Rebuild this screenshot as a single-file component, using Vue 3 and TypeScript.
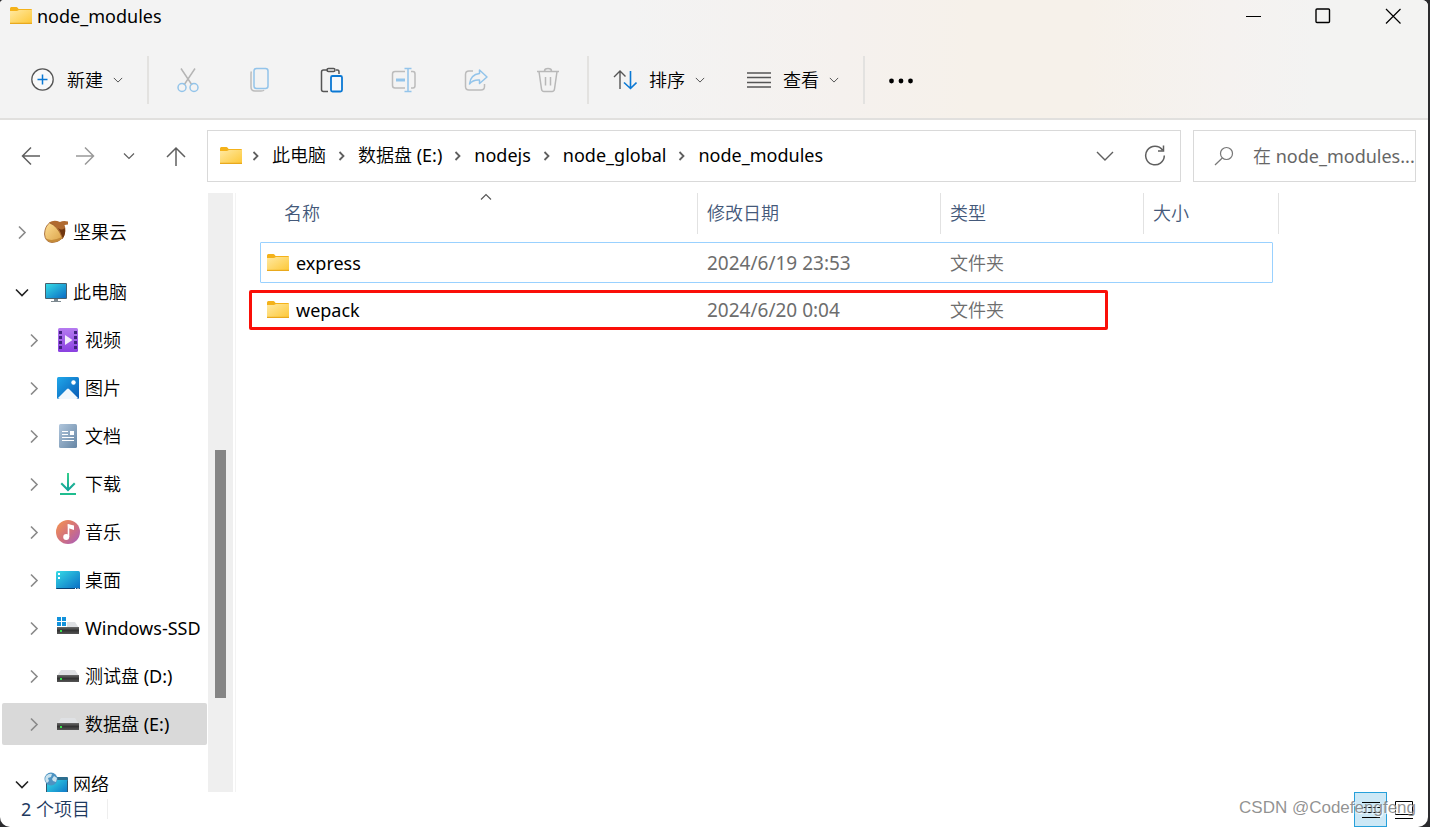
<script setup lang="ts">
import { ref } from 'vue'

interface TreeNode {
  id: string
  label: string
  icon: string
  level: 1 | 2
  open: boolean
  gap: boolean
}

interface FileRow {
  name: string
  modified: string
  type: string
  size: string
}

const tree: TreeNode[] = [
  { id: 'nut', label: '坚果云', icon: 'nut', level: 1, open: false, gap: false },
  { id: 'pc', label: '此电脑', icon: 'pc', level: 1, open: true, gap: true },
  { id: 'video', label: '视频', icon: 'video', level: 2, open: false, gap: false },
  { id: 'pictures', label: '图片', icon: 'picture', level: 2, open: false, gap: false },
  { id: 'documents', label: '文档', icon: 'document', level: 2, open: false, gap: false },
  { id: 'downloads', label: '下载', icon: 'download', level: 2, open: false, gap: false },
  { id: 'music', label: '音乐', icon: 'music', level: 2, open: false, gap: false },
  { id: 'desktop', label: '桌面', icon: 'desktop', level: 2, open: false, gap: false },
  { id: 'c', label: 'Windows-SSD', icon: 'sysdrive', level: 2, open: false, gap: false },
  { id: 'd', label: '测试盘 (D:)', icon: 'drive', level: 2, open: false, gap: false },
  { id: 'e', label: '数据盘 (E:)', icon: 'drive', level: 2, open: false, gap: false },
  { id: 'network', label: '网络', icon: 'network', level: 1, open: true, gap: true },
]

const crumbs = ['此电脑', '数据盘 (E:)', 'nodejs', 'node_global', 'node_modules']

const tools = [
  { id: 'cut', label: '剪切' },
  { id: 'copy', label: '复制' },
  { id: 'paste', label: '粘贴' },
  { id: 'rename', label: '重命名' },
  { id: 'share', label: '共享' },
  { id: 'trash', label: '删除' },
]

const files: FileRow[] = [
  { name: 'express', modified: '2024/6/19 23:53', type: '文件夹', size: '' },
  { name: 'wepack', modified: '2024/6/20 0:04', type: '文件夹', size: '' },
]

const selected = ref('e')
const focusedFile = ref('express')
const markedFile = 'wepack'
const query = ref('')
</script>

<template>
  <div class="window">
    <svg class="defs" aria-hidden="true">
      <defs>
        <linearGradient id="g-folder" x1="0" y1="0" x2="1" y2="1">
          <stop offset="0" stop-color="#ffe9a2" />
          <stop offset="1" stop-color="#fdc735" />
        </linearGradient>
        <linearGradient id="g-screen" x1="0" y1="0" x2="1" y2="1">
          <stop offset="0" stop-color="#35dbe6" />
          <stop offset="1" stop-color="#0a6cc4" />
        </linearGradient>
        <linearGradient id="g-video" x1="0" y1="0" x2="0" y2="1">
          <stop offset="0" stop-color="#b57bf0" />
          <stop offset="1" stop-color="#8a40e0" />
        </linearGradient>
        <linearGradient id="g-pic" x1="0" y1="0" x2="1" y2="1">
          <stop offset="0" stop-color="#20a8ea" />
          <stop offset="1" stop-color="#0759b5" />
        </linearGradient>
        <linearGradient id="g-doc" x1="0" y1="0" x2="1" y2="1">
          <stop offset="0" stop-color="#b0c6dc" />
          <stop offset="1" stop-color="#6686a5" />
        </linearGradient>
        <linearGradient id="g-down" x1="0" y1="0" x2="0" y2="1">
          <stop offset="0" stop-color="#35d08b" />
          <stop offset="1" stop-color="#0f9f9c" />
        </linearGradient>
        <linearGradient id="g-music" x1="0" y1="0" x2="1" y2="1">
          <stop offset="0.1" stop-color="#f08f56" />
          <stop offset="0.55" stop-color="#d0707f" />
          <stop offset="1" stop-color="#a55cc0" />
        </linearGradient>
        <linearGradient id="g-nut" x1="0" y1="0" x2="1" y2="1">
          <stop offset="0" stop-color="#ffdf95" />
          <stop offset="1" stop-color="#d9a045" />
        </linearGradient>
        <linearGradient id="g-drive" x1="0" y1="0" x2="0" y2="1">
          <stop offset="0" stop-color="#6b6b6b" />
          <stop offset="0.5" stop-color="#333333" />
          <stop offset="1" stop-color="#555555" />
        </linearGradient>

        <symbol id="i-folder" viewBox="0 0 24 20">
          <path d="M1 2.6Q1 1 2.4 1H7.4Q8.2 1 8.8 2L9.6 3H22Q23 3 23 4V7H1Z" fill="#f4b21a" />
          <path d="M1 5H8L10 4H23V17Q23 18 22 18H2Q1 18 1 17Z" fill="url(#g-folder)" />
          <path d="M1 17.4H23" stroke="#e9a91d" stroke-width="1.2" />
        </symbol>

        <symbol id="i-nut" viewBox="0 0 24 24">
          <path d="M5 2.500Q10-0.500 16 2Q19 0.500 24 1.500V4.500L20.500 5Q23 12 18.500 19Q13 7 5 2.500Z" fill="#b06a30" />
          <path d="M14 8Q18 11 20.500 8Q22.500 13 18.500 19Q17 12 14 8Z" fill="#70360f" />
          <path d="M5.500 3Q13 5 18.500 18Q14 22.500 8 22.500Q1 22 0.500 14Q1 6 5.500 3Z" fill="url(#g-nut)" stroke="#9a5c28" stroke-width="0.800" />
          <path d="M2 18.500Q8 22 17.800 17L18 18.300Q14 22.300 8 22.200Q4 22 2 18.500Z" fill="#c58b3a" />
        </symbol>

        <symbol id="i-pc" viewBox="0 0 24 24">
          <rect x="1" y="3" width="22" height="16" rx="1" fill="#47606e" />
          <rect x="2" y="4" width="20" height="14" fill="url(#g-screen)" />
          <path d="M10 19H14V21H17V22H7V21H10Z" fill="#7d8990" />
        </symbol>

        <symbol id="i-video" viewBox="0 0 24 24">
          <rect x="2" y="0" width="20" height="24" rx="1.500" fill="url(#g-video)" />
          <path d="M3 3H6V6H3ZM3 8H6V11H3ZM3 13H6V16H3ZM3 18H6V21H3ZM18 3H21V6H18ZM18 8H21V11H18ZM18 13H21V16H18ZM18 18H21V21H18Z" fill="#41217f" />
          <path d="M9 7L16.500 12L9 17Z" fill="#f3edfb" />
        </symbol>

        <symbol id="i-picture" viewBox="0 0 24 24">
          <rect x="1" y="1" width="22" height="22" rx="1.500" fill="url(#g-pic)" />
          <path d="M2 22L11 13Q12 12 13 13L22 22Q21.500 23 20 23H4Q2.500 23 2 22Z" fill="#f1f7fc" />
          <circle cx="17.500" cy="6.500" r="2.200" fill="#fff" />
        </symbol>

        <symbol id="i-document" viewBox="0 0 24 24">
          <rect x="3" y="0" width="18" height="24" rx="1.500" fill="url(#g-doc)" />
          <path d="M6 7.500H12M6 10.500H12M6 13.500H18M6 16.500H18" stroke="#fff" stroke-width="1.200" />
          <rect x="14" y="7" width="4" height="4" fill="#fff" />
        </symbol>

        <symbol id="i-download" viewBox="0 0 24 24">
          <path d="M11 1H13V15.500L18 10.500L19.500 12L12 19.500L4.500 12L6 10.500L11 15.500Z" fill="url(#g-down)" />
          <rect x="4" y="21" width="16" height="2" fill="#1fbd8f" />
        </symbol>

        <symbol id="i-music" viewBox="0 0 24 24">
          <circle cx="12" cy="12" r="12" fill="url(#g-music)" />
          <path d="M12.500 4.500V17" stroke="#fff" stroke-width="1.600" />
          <path d="M11.700 4L18 5.500V10L12 8Z" fill="#fff" />
          <circle cx="10.200" cy="17" r="3" fill="#fff" />
        </symbol>

        <symbol id="i-desktop" viewBox="0 0 24 24">
          <rect x="0" y="3" width="24" height="18" rx="1.500" fill="url(#g-screen)" />
          <path d="M0 20H24Q24 21 23 21H1Q0 21 0 20Z" fill="#0b3f70" />
          <path d="M2 5H4V7H2ZM2 9H4V11H2Z" fill="#fff" />
          <path d="M19 20.500H20M21.500 20.500H22.500" stroke="#fff" stroke-width="1" />
        </symbol>

        <symbol id="i-drive" viewBox="0 0 24 24">
          <path d="M5 6H19L23 12H1Z" fill="#dfe1e4" />
          <rect x="1" y="11" width="22" height="7" fill="url(#g-drive)" />
          <rect x="4" y="14" width="2" height="2" fill="#35e04a" />
        </symbol>

        <symbol id="i-sysdrive" viewBox="0 0 24 24">
          <path d="M5 6H19L23 12H1Z" fill="#dfe1e4" />
          <rect x="1" y="11" width="22" height="7" fill="url(#g-drive)" />
          <rect x="4" y="14" width="2" height="2" fill="#35e04a" />
          <rect x="0" y="0" width="11" height="11" fill="#fff" />
          <path d="M1 1H5V5H1ZM6 1H10V5H6ZM1 6H5V10H1ZM6 6H10V10H6Z" fill="#1292dc" />
        </symbol>

        <symbol id="i-network" viewBox="0 0 24 24">
          <path d="M2 8H24V24H2Z" fill="#2f566f" />
          <path d="M12 5H23Q24 5 24 6V9H12Z" fill="#2c6e8f" />
          <path d="M3 8H23V24H3Z" fill="url(#g-screen)" />
          <circle cx="7" cy="7" r="6.500" fill="#4d93c2" />
          <path d="M2 4Q5 1 8 2L7 5L4 6L5 9L3 11Q0 8 2 4ZM10 4L13 6L12 10L9 9L8 7Z" fill="#c9e2ee" />
        </symbol>

        <symbol id="i-down-chevron" viewBox="0 0 12 12">
          <path d="M1 3.500L6 8.500L11 3.500" fill="none" stroke="currentColor" stroke-width="1.200" />
        </symbol>

        <symbol id="t-cut" viewBox="0 0 30 30">
          <g fill="none" stroke-width="1.500">
            <path d="M8 3.500L19 20M22 3.500L11 20" stroke="#b5b5b5" />
            <circle cx="9" cy="22.500" r="4" stroke="#93c4ea" />
            <circle cx="21" cy="22.500" r="4" stroke="#93c4ea" />
          </g>
        </symbol>
        <symbol id="t-copy" viewBox="0 0 30 30">
          <g fill="none" stroke-width="1.500">
            <path d="M6.500 6.500Q6 7 6 9V22Q6 26 10 26H16Q18.500 26 19 25" stroke="#bcbcbc" />
            <rect x="9" y="3.500" width="14" height="20" rx="2.500" stroke="#93c4ea" />
          </g>
        </symbol>
        <symbol id="t-paste" viewBox="0 0 30 30">
          <g fill="none" stroke-width="1.500">
            <path d="M11 5H6.500Q4.500 5 4.500 7V24.500Q4.500 26.500 6.500 26.500H11M19 5H20.500Q22 5 22 7V9" stroke="#555" />
            <rect x="10" y="3.500" width="8" height="3" rx="1.500" stroke="#555" />
            <rect x="14" y="11" width="11" height="15.500" rx="1.500" stroke="#0a78d4" stroke-width="1.800" fill="#f6f9fc" />
          </g>
        </symbol>
        <symbol id="t-rename" viewBox="0 0 30 30">
          <g fill="none" stroke-width="1.500">
            <path d="M16 6.500H6Q3.500 6.500 3.500 9V20.500Q3.500 23 6 23H16M22 6.500H24Q26 6.500 26 9V20.500Q26 23 24 23H22" stroke="#bcbcbc" />
            <path d="M15.500 3.500H22.500M15.500 26.500H22.500M19 3.500V26.500" stroke="#93c4ea" />
            <path d="M7 15H16" stroke="#93c4ea" stroke-width="3" />
          </g>
        </symbol>
        <symbol id="t-share" viewBox="0 0 30 30">
          <g fill="none" stroke-width="1.500">
            <path d="M12 6H8Q4.500 6 4.500 9.500V21.500Q4.500 25 8 25H20Q23.500 25 23.500 21.500V19" stroke="#bcbcbc" />
            <path d="M18.500 5L26 12L18.500 18.500V15Q12 14.500 8.500 19Q9.500 9.500 18.500 8.500Z" stroke="#93c4ea" stroke-linejoin="round" />
          </g>
        </symbol>
        <symbol id="t-trash" viewBox="0 0 30 30">
          <g fill="none" stroke="#b8b8b8" stroke-width="1.500">
            <path d="M4 6.500H26M11.500 6Q11.500 3.500 15 3.500Q18.500 3.500 18.500 6M6 6.500L8.500 24Q8.800 26.500 11 26.500H19Q21.200 26.500 21.500 24L24 6.500M12.500 12V20.500M17.500 12V20.500" />
          </g>
        </symbol>
      </defs>
    </svg>

    <header class="top">
      <div class="titlebar">
        <svg class="folder"><use href="#i-folder" /></svg>
        <h1 class="title">node_modules</h1>
        <div class="controls">
          <button type="button" class="control" aria-label="最小化">
            <svg width="16" height="16" viewBox="0 0 16 16"><path d="M1 8.500H16" stroke="#000" /></svg>
          </button>
          <button type="button" class="control" aria-label="最大化">
            <svg width="16" height="16" viewBox="0 0 16 16"><rect x="1" y="1" width="13.500" height="13.500" rx="1" fill="none" stroke="#000" stroke-width="1.400" /></svg>
          </button>
          <button type="button" class="control" aria-label="关闭">
            <svg width="16" height="16" viewBox="0 0 16 16"><path d="M1 1L15.500 15.500M15.500 1L1 15.500" stroke="#000" stroke-width="1.200" /></svg>
          </button>
        </div>
      </div>

      <div class="commands">
        <button type="button" class="command">
          <svg width="24" height="24" viewBox="0 0 24 24">
            <circle cx="11.500" cy="11.500" r="10.700" fill="#f9f9f9" stroke="#555" stroke-width="1.300" />
            <path d="M11.500 6.500V16.500M6.500 11.500H16.500" stroke="#0a78d4" stroke-width="1.500" />
          </svg>
          <span>新建</span>
          <svg class="caret"><use href="#i-down-chevron" /></svg>
        </button>
        <span class="divider"></span>
        <div class="tools">
          <button v-for="t in tools" :key="t.id" type="button" class="tool" :aria-label="t.label">
            <svg width="30" height="30"><use :href="`#t-${t.id}`" /></svg>
          </button>
        </div>
        <span class="divider"></span>
        <div class="menus">
          <button type="button" class="command">
            <svg width="24" height="24" viewBox="0 0 24 24" fill="none" stroke-width="1.400">
              <path d="M7 21V3M1 9L7 3L12.500 8.500" stroke="#555" />
              <path d="M17.500 3V20.500M11 14.500L17.500 20.500L23.500 14.500" stroke="#0a78d4" stroke-width="1.600" />
            </svg>
            <span>排序</span>
            <svg class="caret"><use href="#i-down-chevron" /></svg>
          </button>
          <button type="button" class="command">
            <svg width="24" height="24" viewBox="0 0 24 24">
              <path d="M0 5H24M0 9.500H24M0 14.500H24M0 19H24" stroke="#555" stroke-width="1.400" />
            </svg>
            <span>查看</span>
            <svg class="caret"><use href="#i-down-chevron" /></svg>
          </button>
        </div>
        <span class="divider"></span>
        <button type="button" class="command" aria-label="更多">
          <svg width="24" height="24" viewBox="0 0 24 24">
            <circle cx="2.500" cy="13" r="2.400" /><circle cx="12" cy="13" r="2.400" /><circle cx="21.500" cy="13" r="2.400" />
          </svg>
        </button>
      </div>
    </header>

    <div class="navigation">
      <nav class="history">
        <button type="button" aria-label="后退">
          <svg width="20" height="20" viewBox="0 0 20 20"><path d="M19 10H1.500M10 1.500L1.500 10L10 18.500" fill="none" stroke="#5f5f5f" stroke-width="1.500" /></svg>
        </button>
        <button type="button" aria-label="前进">
          <svg width="20" height="20" viewBox="0 0 20 20"><path d="M1 10H18.500M10 1.500L18.500 10L10 18.500" fill="none" stroke="#999" stroke-width="1.500" /></svg>
        </button>
        <button type="button" aria-label="最近位置">
          <svg class="recent"><use href="#i-down-chevron" /></svg>
        </button>
        <button type="button" aria-label="上移">
          <svg width="20" height="20" viewBox="0 0 20 20"><path d="M10 20V2M1 11L10 2L19 11" fill="none" stroke="#5f5f5f" stroke-width="1.500" /></svg>
        </button>
      </nav>

      <div class="address">
        <svg class="folder"><use href="#i-folder" /></svg>
        <ol class="crumbs">
          <li v-for="c in crumbs" :key="c">
            <svg class="sep" viewBox="0 0 8 10"><path d="M1.500 1L5.500 5L1.500 9" fill="none" stroke="#5f5f5f" stroke-width="1.800" /></svg>
            <a href="#">{{ c }}</a>
          </li>
        </ol>
        <button type="button" class="box-button" aria-label="历史记录">
          <svg width="18" height="18" viewBox="0 0 18 18"><path d="M1 5L9 13L17 5" fill="none" stroke="#5f5f5f" stroke-width="1.400" /></svg>
        </button>
        <button type="button" class="box-button" aria-label="刷新">
          <svg width="22" height="22" viewBox="0 0 22 22"><path d="M18.500 5A9.300 9.300 0 1 0 20.300 10.500M19.500 0.500V6H14" fill="none" stroke="#5f5f5f" stroke-width="1.500" /></svg>
        </button>
      </div>

      <div class="search">
        <svg width="20" height="20" viewBox="0 0 20 20"><circle cx="12.500" cy="7.500" r="6" fill="none" stroke="#777" stroke-width="1.200" /><path d="M8.300 12L1 19" stroke="#777" stroke-width="1.200" /></svg>
        <input v-model="query" type="text" aria-label="搜索" placeholder="在 node_modules..." />
      </div>
    </div>

    <main class="body">
      <nav class="sidebar">
        <ul>
          <li v-for="n in tree" :key="n.id" :class="{ gap: n.gap }">
            <button type="button" class="node" :class="[`level-${n.level}`, { selected: selected === n.id }]" @click="selected = n.id">
              <svg v-if="n.open" class="arrow open" viewBox="0 0 14 14"><path d="M1 4.500L7 10.500L13 4.500" fill="none" stroke="#222" stroke-width="1.600" /></svg>
              <svg v-else class="arrow" viewBox="0 0 14 14"><path d="M4 1.500L10 7.500L4 13.500" fill="none" stroke="#8a8a8a" stroke-width="1.600" /></svg>
              <svg class="node-icon"><use :href="`#i-${n.icon}`" /></svg>
              <span>{{ n.label }}</span>
            </button>
          </li>
        </ul>
      </nav>
      <div class="scrollbar"><div class="thumb"></div></div>
      <div class="splitter"></div>

      <section class="files">
        <table>
          <colgroup>
            <col class="col-name" /><col class="col-date" /><col class="col-type" /><col class="col-size" />
          </colgroup>
          <thead>
            <tr>
              <th scope="col">
                <svg class="sort" viewBox="0 0 12 8"><path d="M1 6.500L6 1.500L11 6.500" fill="none" stroke="#555" stroke-width="1.100" /></svg>
                名称
              </th>
              <th scope="col">修改日期</th>
              <th scope="col">类型</th>
              <th scope="col">大小</th>
            </tr>
          </thead>
          <tbody>
            <tr
              v-for="f in files"
              :key="f.name"
              :class="{ focused: focusedFile === f.name, marked: markedFile === f.name }"
              @click="focusedFile = f.name"
            >
              <td>
                <div class="name"><svg class="folder"><use href="#i-folder" /></svg>{{ f.name }}</div>
              </td>
              <td class="date">{{ f.modified }}</td>
              <td>{{ f.type }}</td>
              <td>{{ f.size }}</td>
            </tr>
          </tbody>
        </table>
      </section>
    </main>

    <footer class="status">
      <span class="count">2 个项目</span>
      <div class="views">
        <button type="button" class="view active" aria-label="详细信息">
          <svg width="18" height="18" viewBox="0 0 18 18"><path d="M0 1.500H18M0 6.500H18M0 11.500H18M0 16.500H18" stroke="#000" /></svg>
        </button>
        <button type="button" class="view" aria-label="大图标">
          <svg width="18" height="18" viewBox="0 0 18 18"><path d="M0.500 0.500H17.500V13.500H0.500ZM0 17.500H18" fill="none" stroke="#000" /></svg>
        </button>
      </div>
      <span class="watermark">CSDN @Codefengfeng</span>
    </footer>
  </div>
</template>

<style>
body {
  margin: 0;
  background: #2b2b2e;
}
</style>

<style scoped>
.window {
  box-sizing: border-box;
  display: flex;
  flex-direction: column;
  height: 100vh;
  margin-right: 2px;
  overflow: hidden;
  border-radius: 4px 6px 10px 10px;
  background: #fff;
  color: #000;
  font: 400 18px/24px "Noto Sans", "Noto Sans CJK SC DemiLight", "Noto Sans CJK SC", sans-serif;
}

.defs {
  position: absolute;
  width: 0;
  height: 0;
}

svg {
  display: block;
  flex: none;
}

button {
  display: flex;
  align-items: center;
  justify-content: center;
  margin: 0;
  padding: 0;
  border: 0;
  background: none;
  color: inherit;
  font: inherit;
}

.folder {
  width: 24px;
  height: 20px;
}

.top {
  flex: none;
  border-bottom: 2px solid #e1e0de;
  background: linear-gradient(92deg, #f3f3f3 44%, #f5f1ee 59%, #f6f1ea 68%, #f6f1ea 76%, #f5f2f0 86%, #f3f3f2 92%);
}

.titlebar {
  display: flex;
  align-items: center;
  height: 32px;
  padding-left: 9px;
}

.title {
  margin: 0 0 0 4px;
  font-size: 18px;
  font-weight: inherit;
}

.controls {
  display: flex;
  margin-left: auto;
}

.control {
  width: 70px;
  height: 32px;
}

.commands {
  display: flex;
  align-items: center;
  height: 76px;
  padding: 10px 0 0 31px;
}

.command {
  gap: 10px;
  height: 48px;
}

.command span {
  padding-left: 2px;
}

.caret {
  width: 10px;
  height: 10px;
  color: #555;
}

.divider {
  width: 2px;
  height: 48px;
  margin: 0 24px;
  background: #e3e2e0;
}

.tools,
.menus {
  display: flex;
  gap: 42px;
}

.navigation {
  display: flex;
  flex: none;
  gap: 12px;
  padding: 10px 12px 11px 4px;
}

.history {
  display: grid;
  grid-template-columns: 54px 54px 34px 60px;
  margin-right: -11px;
}

.recent {
  width: 12px;
  height: 12px;
  color: #5f5f5f;
}

.address {
  box-sizing: border-box;
  display: flex;
  flex: 1;
  align-items: center;
  height: 52px;
  padding-left: 11px;
  border: 1px solid #d9d9d9;
}

.address .folder {
  margin-right: -3px;
}

.crumbs {
  display: flex;
  margin: 0 auto 0 0;
  padding: 0 0 2px;
  list-style: none;
}

.crumbs li {
  display: flex;
  align-items: center;
}

.crumbs a {
  color: inherit;
  text-decoration: none;
}

.sep {
  width: 8px;
  height: 10px;
  margin: 2px 12px 0;
}

.box-button {
  width: 50px;
  height: 50px;
}

.search {
  box-sizing: border-box;
  display: flex;
  align-items: center;
  gap: 19px;
  width: 223px;
  height: 52px;
  padding-left: 20px;
  border: 1px solid #d9d9d9;
}

.search input {
  flex: 1;
  min-width: 0;
  padding: 0;
  border: 0;
  outline: 0;
  background: none;
  color: #000;
  font: inherit;
}

.search input::placeholder {
  color: #666;
  opacity: 1;
}

.body {
  display: flex;
  flex: 1;
  min-height: 0;
}

.sidebar {
  width: 208px;
  overflow: hidden;
}

.sidebar ul {
  margin: 0;
  padding: 15px 1px 0 2px;
  list-style: none;
}

.sidebar li {
  padding: 3px 0;
}

.sidebar .gap {
  margin-top: 12px;
}

.node {
  justify-content: flex-start;
  width: 100%;
  height: 42px;
  border-radius: 2px;
  line-height: 18px;
  white-space: nowrap;
}

.node.level-1 {
  padding-left: 13px;
}

.node.level-2 {
  padding-left: 25px;
}

.node.selected {
  background: #d9d9d9;
}

.arrow {
  width: 14px;
  height: 14px;
}

.node-icon {
  width: 24px;
  height: 24px;
  margin: 0 5px 0 15px;
}

.scrollbar {
  display: grid;
  grid-template-rows: 257fr 248fr 94fr;
  width: 25px;
  background: #efefef;
}

.thumb {
  grid-row: 2;
  width: 11px;
  margin-left: 7px;
  background: #858585;
}

.splitter {
  width: 1px;
  margin-left: 2px;
  background: #f3f3f3;
}

.files {
  flex: 1;
  padding-left: 24px;
}

table {
  width: 1019px;
  border-collapse: separate;
  border-spacing: 0;
  table-layout: fixed;
}

.col-name {
  width: 437px;
}

.col-date {
  width: 243px;
}

.col-type {
  width: 203px;
}

.col-size {
  width: 136px;
}

th {
  position: relative;
  box-sizing: border-box;
  height: 41px;
  padding: 0 0 2px 9px;
  border-left: 1px solid #e2e2e2;
  color: #44597a;
  font-weight: inherit;
  text-align: left;
}

th:first-child {
  padding-left: 24px;
  border-left: 0;
}

th:last-child {
  border-right: 1px solid #e2e2e2;
}

.sort {
  position: absolute;
  top: 0;
  left: 220px;
  width: 12px;
  height: 8px;
}

tbody::before {
  content: "";
  display: block;
  height: 5px;
}

tbody tr {
  position: relative;
}

td {
  height: 47px;
  padding: 0 0 0 10px;
  color: #6d6d6d;
}

td:first-child {
  padding-left: 6px;
  color: #000;
}

.date {
  font-size: 19px;
}

.name {
  display: flex;
  align-items: center;
  gap: 6px;
}

.focused::after,
.marked::after {
  content: "";
  position: absolute;
  inset: 3px 6px 3px 0;
  border: 1px solid #99d1ff;
  border-radius: 1px;
}

.marked::after {
  inset: 4px 171px 3px -11px;
  border: 3px solid #fa0f08;
  border-radius: 2px;
}

.status {
  position: relative;
  display: flex;
  flex: none;
  justify-content: space-between;
  align-items: center;
  height: 35px;
  padding: 0 12px 0 21px;
}

.count {
  margin-bottom: 2px;
  padding-right: 17px;
  border-right: 1px solid #eee;
  color: #1e3a5f;
  line-height: 20px;
}

.views {
  display: flex;
}

.view {
  box-sizing: border-box;
  width: 33px;
  height: 35px;
}

.view.active {
  border: 1px solid #26a0da;
  background: #cce8f6;
}

.view:last-child {
  width: 29px;
  padding-left: 5px;
}

.watermark {
  position: absolute;
  top: 4px;
  right: 12px;
  color: rgba(110, 110, 110, 0.75);
  font: 400 17px/24px "Liberation Sans", Arial, sans-serif;
  text-shadow: 1px 1px 1px #fff;
  pointer-events: none;
}
</style>
